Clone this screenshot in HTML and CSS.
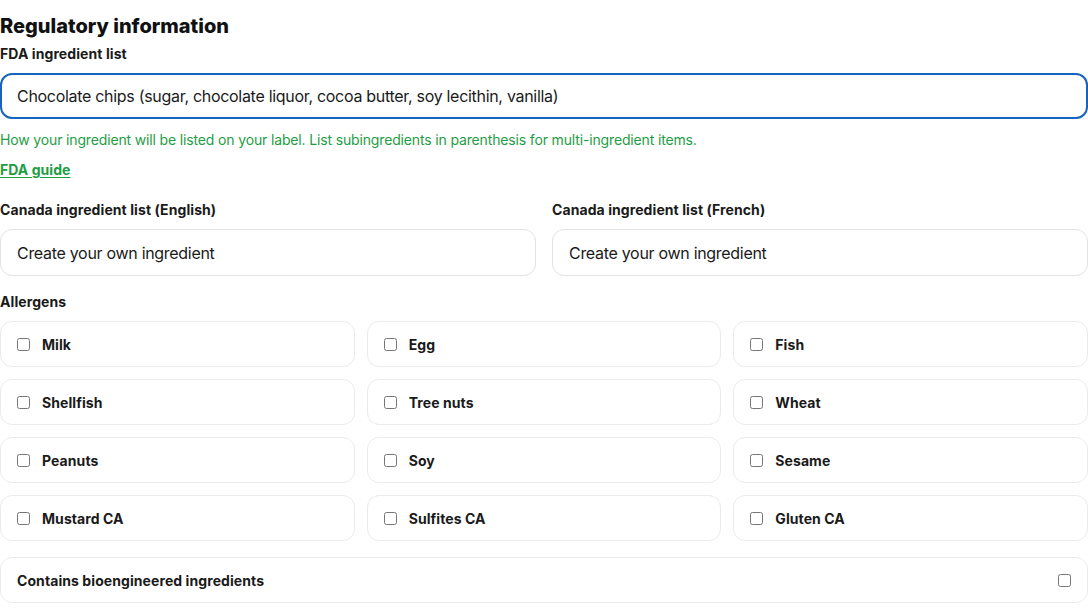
FILE: index.html
```html
<!DOCTYPE html>
<html lang="en">
<head>
<meta charset="utf-8">
<title>Regulatory information</title>
<link rel="stylesheet" href="styles.css">
</head>
<body>
<main class="page">
  <h2 class="title">Regulatory information</h2>

  <section class="field">
    <label class="label label-fda" for="fda">FDA ingredient list</label>
    <input id="fda" class="input input-focus" type="text" value="Chocolate chips (sugar, chocolate liquor, cocoa butter, soy lecithin, vanilla)">
    <p class="help">How your ingredient will be listed on your label. List subingredients in parenthesis for multi-ingredient items.</p>
    <a class="guide" href="#">FDA guide</a>
  </section>

  <section class="two-col">
    <div class="col">
      <label class="label" for="ca-en">Canada ingredient list (English)</label>
      <input id="ca-en" class="input" type="text" placeholder="Create your own ingredient">
    </div>
    <div class="col">
      <label class="label" for="ca-fr">Canada ingredient list (French)</label>
      <input id="ca-fr" class="input" type="text" placeholder="Create your own ingredient">
    </div>
  </section>

  <section class="allergens">
    <div class="label">Allergens</div>
    <div class="grid">
      <label class="card"><input type="checkbox" class="check"><span>Milk</span></label>
      <label class="card"><input type="checkbox" class="check"><span>Egg</span></label>
      <label class="card"><input type="checkbox" class="check"><span>Fish</span></label>
      <label class="card"><input type="checkbox" class="check"><span>Shellfish</span></label>
      <label class="card"><input type="checkbox" class="check"><span>Tree nuts</span></label>
      <label class="card"><input type="checkbox" class="check"><span>Wheat</span></label>
      <label class="card"><input type="checkbox" class="check"><span>Peanuts</span></label>
      <label class="card"><input type="checkbox" class="check"><span>Soy</span></label>
      <label class="card"><input type="checkbox" class="check"><span>Sesame</span></label>
      <label class="card"><input type="checkbox" class="check"><span>Mustard CA</span></label>
      <label class="card"><input type="checkbox" class="check"><span>Sulfites CA</span></label>
      <label class="card"><input type="checkbox" class="check"><span>Gluten CA</span></label>
    </div>
  </section>

  <label class="bio">
    <span>Contains bioengineered ingredients</span>
    <input type="checkbox" class="check">
  </label>
</main>
</body>
</html>
```

FILE: styles.css
```css
* { box-sizing: border-box; }

html, body {
  margin: 0;
  padding: 0;
  background: #ffffff;
}

body {
  font-family: Inter, "Noto Sans", "Liberation Sans", sans-serif;
  color: #1a1a1a;
  -webkit-font-smoothing: antialiased;
}

.page {
  width: 1088px;
  padding-top: 14px;
  display: flex;
  flex-direction: column;
}

.title {
  margin: 0;
  font-size: 20px;
  line-height: 24px;
  font-weight: 800;
  letter-spacing: 0;
  color: #111;
}

.field {
  display: flex;
  flex-direction: column;
  align-items: flex-start;
  margin-top: 5px;
}

.label {
  display: block;
  font-size: 14px;
  line-height: 20px;
  font-weight: 700;
  letter-spacing: 0.08px;
  color: #1a1a1a;
  margin-bottom: 9px;
}

.label-fda {
  margin-top: 1px;
  margin-bottom: 9px;
}

.input {
  display: block;
  width: 100%;
  height: 47px;
  margin: 0;
  padding: 0 16px;
  border: 1px solid #e3e3e3;
  border-radius: 12px;
  font-family: inherit;
  font-size: 16px;
  letter-spacing: -0.3px;
  color: #1a1a1a;
  background: #fff;
  outline: none;
}

.input::placeholder {
  color: #1a1a1a;
  opacity: 1;
}

.input-focus {
  height: 46px;
  border: 2px solid #1565c0;
  padding: 0 15px;
}

.help {
  margin: 11px 0 0;
  font-size: 14px;
  line-height: 20px;
  letter-spacing: -0.15px;
  color: #1f9d45;
}

.guide {
  margin-top: 10px;
  font-size: 14px;
  line-height: 20px;
  font-weight: 700;
  letter-spacing: 0.05px;
  color: #1f9d45;
  text-decoration: underline;
  text-underline-offset: 2px;
}

.two-col {
  display: grid;
  grid-template-columns: 1fr 1fr;
  column-gap: 16px;
  margin-top: 20px;
}

.col {
  display: flex;
  flex-direction: column;
}

.allergens {
  margin-top: 16px;
}

.grid {
  display: grid;
  grid-template-columns: repeat(3, 1fr);
  gap: 12px;
}

.card {
  display: flex;
  align-items: center;
  gap: 12px;
  height: 46px;
  padding: 0 16px;
  border: 1px solid #ebebeb;
  border-radius: 12px;
  font-size: 14px;
  font-weight: 700;
  letter-spacing: 0.08px;
  color: #1a1a1a;
}

.check {
  width: 13px;
  height: 13px;
  margin: 0;
  flex: none;
}

.bio {
  display: flex;
  align-items: center;
  justify-content: space-between;
  height: 46px;
  margin-top: 16px;
  padding: 0 16px;
  border: 1px solid #ebebeb;
  border-radius: 12px;
  font-size: 14px;
  font-weight: 700;
  letter-spacing: 0.08px;
  color: #1a1a1a;
}
```
